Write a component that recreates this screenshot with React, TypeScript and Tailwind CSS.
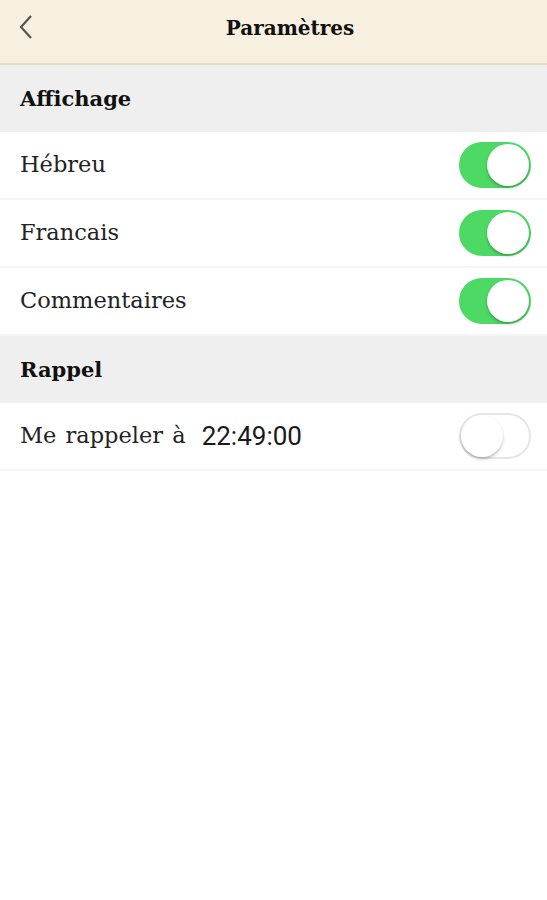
import { useState } from "react";

const serif = "font-['DejaVu_Serif',serif]";

function Toggle({ on, onChange }: { on: boolean; onChange: () => void }) {
  return (
    <button
      onClick={onChange}
      className={`relative h-[46px] w-[72px] rounded-full border-2 transition-colors ${
        on ? "border-[#4cd964] bg-[#4cd964]" : "border-[#e6e6e6] bg-white"
      }`}
    >
      <span
        className={`absolute top-0 h-[42px] w-[42px] rounded-full bg-white shadow-[0_2px_3px_rgba(0,0,0,0.25)] ${
          on ? "left-[26px]" : "left-0"
        }`}
      />
    </button>
  );
}

function Section({ title }: { title: string }) {
  return (
    <div className={`flex h-[67px] items-center bg-[#efefef] px-5 text-[21px] font-bold text-[#111] ${serif}`}>
      {title}
    </div>
  );
}

function Row({ children, on, onChange }: { children: React.ReactNode; on: boolean; onChange: () => void }) {
  return (
    <div className="flex h-[68px] items-center justify-between border-b-2 border-[#f4f4f4] bg-white pl-5 pr-4">
      <div className={`flex items-center text-[22.5px] text-[#222] ${serif}`}>{children}</div>
      <Toggle on={on} onChange={onChange} />
    </div>
  );
}

export default function App() {
  const [hebreu, setHebreu] = useState(true);
  const [francais, setFrancais] = useState(true);
  const [comments, setComments] = useState(true);
  const [rappel, setRappel] = useState(false);

  return (
    <div className="min-h-[900px] w-[547px] bg-white">
      <div className="relative flex h-[65px] items-center justify-center border-b-2 border-[#e3dccd] bg-[#f7efdf] pb-2">
        <button className="absolute left-[14px] top-[10px] p-1 text-[#555]">
          <svg width="16" height="26" viewBox="0 0 16 26" fill="none" stroke="currentColor" strokeWidth="2.2">
            <path d="M13 2 L3 13 L13 24" />
          </svg>
        </button>
        <h1 className={`pl-[33px] text-[20px] font-bold text-[#111] ${serif}`}>Paramètres</h1>
      </div>

      <Section title="Affichage" />
      <Row on={hebreu} onChange={() => setHebreu(!hebreu)}>Hébreu</Row>
      <Row on={francais} onChange={() => setFrancais(!francais)}>Francais</Row>
      <Row on={comments} onChange={() => setComments(!comments)}>Commentaires</Row>

      <Section title="Rappel" />
      <Row on={rappel} onChange={() => setRappel(!rappel)}>
        <span className="[word-spacing:2px]">Me rappeler à</span>
        <span className="ml-4 font-['Roboto',sans-serif] text-[26px] text-[#1a1a1a]">22:49:00</span>
      </Row>
    </div>
  );
}
